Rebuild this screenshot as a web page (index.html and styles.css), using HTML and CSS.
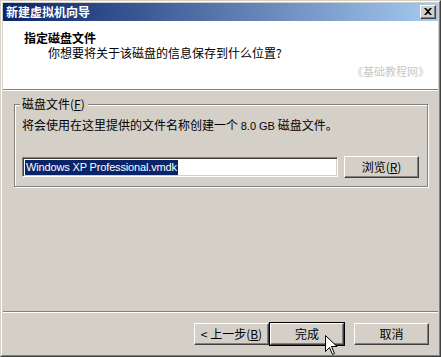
FILE: index.html
```html
<!DOCTYPE html>
<html>
<head>
<meta charset="utf-8">
<link rel="stylesheet" href="styles.css">
</head>
<body>
<div class="window">
  <div class="frame">
    <div class="titlebar">
      <span class="title">新建虚拟机向导</span>
      <div class="close"><svg width="8" height="7" viewBox="0 0 8 7"><path d="M0 0h2l2 2 2-2h2L5 3.5 8 7H6L4 5 2 7H0l3-3.5z" fill="#000"/></svg></div>
    </div>
    <div class="header">
      <div class="h-title">指定磁盘文件</div>
      <div class="h-sub">你想要将关于该磁盘的信息保存到什么位置?</div>
      <div class="watermark">《基础教程网》</div>
    </div>
    <div class="sep"></div>
    <div class="content">
      <div class="group">
        <span class="legend">磁盘文件(<u>F</u>)</span>
        <div class="desc">将会使用在这里提供的文件名称创建一个 <span class="lat">8.0 GB</span> 磁盘文件。</div>
        <div class="file-row">
          <div class="input"><span class="sel">Windows XP Professional.vmdk</span></div>
          <div class="btn">浏览(<u>R</u>)</div>
        </div>
      </div>
    </div>
    <div class="sep"></div>
    <div class="footer">
      <div class="btn">&lt; 上一步(<u>B</u>)</div>
      <div class="btn default">完成</div>
      <div class="btn cancel">取消</div>
      <svg class="cursor" width="12" height="21" viewBox="0 0 12 21"><path d="M0.5 0.5v16l4-4 3 7 2-1-3-7h5.5z" fill="#fff" stroke="#000" stroke-width="1"/></svg>
    </div>
  </div>
</div>
</body>
</html>
```
FILE: styles.css
```css
html, body { margin: 0; padding: 0; }
body {
  background: #d4d0c8;
  font-family: "Noto Sans CJK SC", "Liberation Sans", sans-serif;
  font-size: 12px;
  color: #000;
}
.window {
  width: 441px;
  height: 357px;
  box-sizing: border-box;
  border: 1px solid;
  border-color: #d4d0c8 #404040 #404040 #d4d0c8;
  background: #d4d0c8;
}
.frame {
  height: 100%;
  box-sizing: border-box;
  border: 1px solid;
  border-color: #fff #808080 #808080 #fff;
  padding: 1px;
  display: flex;
  flex-direction: column;
}
.titlebar {
  height: 18px;
  flex: none;
  background: linear-gradient(to right, #0a246a, #a6caf0);
  display: flex;
  align-items: center;
  justify-content: space-between;
  padding: 0 2px 0 3px;
}
.title {
  color: #fff;
  font-weight: bold;
  font-size: 12px;
  line-height: 14px;
}
.close {
  width: 16px;
  height: 14px;
  box-sizing: border-box;
  background: #d4d0c8;
  border: 1px solid;
  border-color: #fff #404040 #404040 #fff;
  box-shadow: inset -1px -1px 0 #808080;
  display: flex;
  align-items: center;
  justify-content: center;
  padding: 0 1px 1px 0;
}
.header {
  height: 68px;
  flex: none;
  background: #fff;
  display: flex;
  flex-direction: column;
  padding: 10px 9px 0 21px;
  box-sizing: border-box;
}
.h-title {
  font-weight: bold;
  line-height: 13px;
  height: 13px;
}
.h-sub {
  line-height: 13px;
  margin: 2px 0 0 24px;
}
.watermark {
  align-self: flex-end;
  color: #c8c8c8;
  line-height: 13px;
  margin-top: 6px;
  font-size: 11px;
}
.sep {
  flex: none;
  border-top: 1px solid #808080;
  border-bottom: 1px solid #fff;
  height: 0;
}
.content {
  height: 220px;
  flex: none;
  padding: 13px 10px 0 11px;
  box-sizing: border-box;
}
.group {
  position: relative;
  height: 83px;
  box-sizing: border-box;
  border: 1px solid #808080;
  box-shadow: inset 1px 1px 0 #fff, 1px 1px 0 #fff;
  padding: 13px 8px 0 7px;
}
.legend {
  position: absolute;
  left: 5px;
  top: -8px;
  padding: 0 3px 0 2px;
  background: #d4d0c8;
  line-height: 14px;
}
.desc {
  line-height: 14px;
}
.lat { font-family: "Liberation Sans", sans-serif; font-size: 11px; }
.file-row {
  display: flex;
  align-items: center;
  margin-top: 23px;
  gap: 6px;
}
.input {
  width: 316px;
  height: 20px;
  box-sizing: border-box;
  background: #fff;
  border: 1px solid;
  border-color: #808080 #fff #fff #808080;
  box-shadow: inset 1px 1px 0 #404040, inset -1px -1px 0 #d4d0c8;
  padding: 2px 0 0 2px;
  font-family: "Liberation Sans", sans-serif;
  font-size: 11px;
  line-height: 14px;
}
.sel {
  background: #0a246a;
  color: #fff;
  display: inline-block;
  height: 15px;
  padding: 0 1px;
  letter-spacing: -0.15px;
}
.btn {
  width: 75px;
  height: 22px;
  box-sizing: border-box;
  background: #d4d0c8;
  border: 1px solid;
  border-color: #fff #404040 #404040 #fff;
  box-shadow: inset -1px -1px 0 #808080;
  display: flex;
  align-items: center;
  justify-content: center;
  line-height: 14px;
  flex: none;
}
.btn u { text-underline-offset: 1px; }
.footer {
  flex: 1;
  position: relative;
  display: flex;
  justify-content: flex-end;
  align-items: flex-start;
  padding: 10px 9px 0 0;
  box-sizing: border-box;
}
.btn.default {
  outline: 1px solid #000;
  outline-offset: 0;
  margin-left: 1px;
  width: 74px;
}
.btn.cancel {
  margin-left: 10px;
}
.cursor {
  position: absolute;
  left: 322px;
  top: 22px;
}
```
